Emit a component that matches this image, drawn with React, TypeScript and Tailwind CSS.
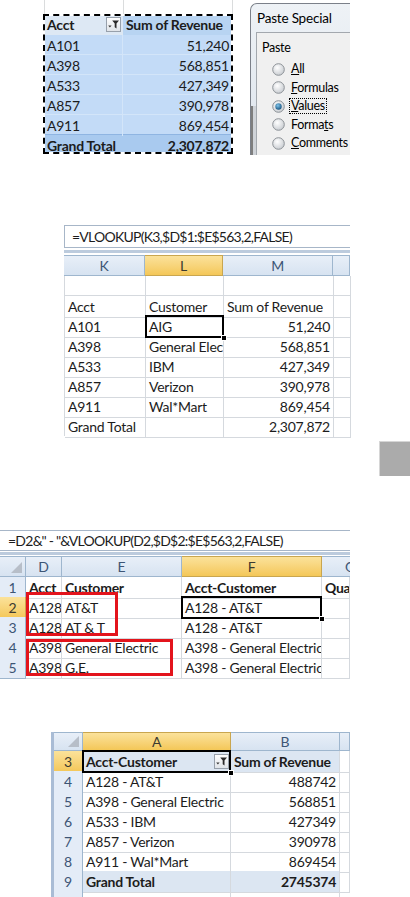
import React from "react";

const FONT = "font-['Lato','Open_Sans',sans-serif] text-[14px] tracking-[-0.25px]";
const FBAR = "text-[14px] tracking-[-0.75px]";
const UI = "font-['Lato','Open_Sans',sans-serif]";

function Cell({
  children,
  right = false,
  bold = false,
  bg = "",
  sel = false,
}: {
  children?: React.ReactNode;
  right?: boolean;
  bold?: boolean;
  bg?: string;
  sel?: boolean;
}) {
  return (
    <div className={`relative border-r border-b border-[#d5d9de] ${bg}`}>
      <div
        className={`flex h-full items-center overflow-hidden whitespace-nowrap px-[3px] ${
          right ? "justify-end" : "justify-start"
        } ${bold ? "font-bold" : ""}`}
      >
        {children}
      </div>
      {sel && <SelBox />}
    </div>
  );
}

function SelBox() {
  return (
    <>
      <div className="pointer-events-none absolute left-[-1px] top-[-1px] right-[-1px] bottom-[-1px] z-10 border-2 border-black" />
      <div className="absolute right-[-4px] bottom-[-4px] z-20 h-[6px] w-[6px] border border-white bg-black" />
    </>
  );
}

function ColHead({ children, sel = false }: { children?: React.ReactNode; sel?: boolean }) {
  return (
    <div
      className={`flex items-center justify-center overflow-hidden whitespace-nowrap border-r border-b border-t text-[14px] ${
        sel
          ? "border-[#c9a64f] bg-gradient-to-b from-[#fbe29a] to-[#f4c757] text-[#3c3a30]"
          : "border-[#9eb6ce] bg-gradient-to-b from-[#e8eff8] to-[#d7e3f1] text-[#3d5575]"
      }`}
    >
      {children}
    </div>
  );
}

function RowHead({ children, sel = false }: { children?: React.ReactNode; sel?: boolean }) {
  return (
    <div
      className={`flex items-center justify-center border-r border-b text-[14px] ${
        sel
          ? "border-[#c9a64f] bg-gradient-to-b from-[#fbe29a] to-[#f4c757] text-[#3c3a30]"
          : "border-[#9eb6ce] bg-[#e4ecf7] text-[#3d5575]"
      }`}
    >
      {children}
    </div>
  );
}

function Corner() {
  return (
    <div className="relative border-r border-b border-t border-[#9eb6ce] bg-gradient-to-b from-[#e8eff8] to-[#d7e3f1]">
      <svg className="absolute right-[2px] bottom-[2px]" width="13" height="13" viewBox="0 0 13 13">
        <path d="M12 1 L12 12 L1 12 Z" fill="#b7bec8" />
      </svg>
    </div>
  );
}

function FilterBtn() {
  return (
    <svg width="15" height="15" viewBox="0 0 15 15" className="shrink-0">
      <defs>
        <linearGradient id="fbg" x1="0" y1="0" x2="0" y2="1">
          <stop offset="0" stopColor="#ffffff" />
          <stop offset="1" stopColor="#dfe3e8" />
        </linearGradient>
      </defs>
      <rect x="0.5" y="0.5" width="14" height="14" fill="url(#fbg)" stroke="#97a0ab" />
      <path d="M2.2 8.6 H5.6 L3.9 10.6 Z" fill="#3a3a3a" />
      <path d="M6.2 3.4 H13 L10.5 6.6 V11.4 L8.7 10.2 V6.6 Z" fill="#2a2a2a" />
    </svg>
  );
}

function Radio({ on = false }: { on?: boolean }) {
  return (
    <svg width="13" height="13" viewBox="0 0 13 13" className="shrink-0">
      <defs>
        <radialGradient id={on ? "rgon" : "rgoff"} cx="40%" cy="35%" r="70%">
          <stop offset="0" stopColor="#ffffff" />
          <stop offset="1" stopColor="#c6cacf" />
        </radialGradient>
        <radialGradient id="dot" cx="40%" cy="35%" r="70%">
          <stop offset="0" stopColor="#7fc3ea" />
          <stop offset="1" stopColor="#14507c" />
        </radialGradient>
      </defs>
      <circle cx="6.5" cy="6.5" r="5.8" fill={on ? "url(#rgon)" : "url(#rgoff)"} stroke="#8d9297" strokeWidth="1" />
      {on && <circle cx="6.5" cy="6.5" r="3.2" fill="url(#dot)" />}
    </svg>
  );
}

function Section1() {
  const rows: [string, string][] = [
    ["A101", "51,240"],
    ["A398", "568,851"],
    ["A533", "427,349"],
    ["A857", "390,978"],
    ["A911", "869,454"],
  ];
  return (
    <div className="flex h-[155px]">
      <div className="ml-[43px] w-[190px]">
        <div className="flex h-[14px] pl-[1px]">
          <div className="w-[79px] border-l border-[#dadcdd]" />
          <div className="w-[109px] border-l border-[#dadcdd]" />
          <div className="w-[1px] border-l border-[#dadcdd]" />
        </div>
        <div className={`relative text-[#1c1c1c] ${FONT}`}>
          <div className="grid h-[20px] grid-cols-[80px_110px]">
            <div className="flex items-center justify-between bg-[#dde8f4] pl-[4px] pr-[2px] font-bold">
              <span>Acct</span>
              <FilterBtn />
            </div>
            <div className="flex items-center bg-[#b8d4f2] pl-[3px] font-bold">Sum of Revenue</div>
          </div>
          {rows.map(([a, v]) => (
            <div key={a} className="grid h-[20px] grid-cols-[80px_110px] border-t border-[#d3e5f9] bg-[#c3dbf7]">
              <div className="flex items-center border-r border-[#d3e5f9] pl-[4px]">{a}</div>
              <div className="flex items-center justify-end pr-[4px]">{v}</div>
            </div>
          ))}
          <div className="grid h-[20px] grid-cols-[80px_110px] border-t border-[#8fb5e2] bg-[#a9caef] font-bold">
            <div className="flex items-center pl-[4px]">Grand Total</div>
            <div className="flex items-center justify-end pr-[4px]">2,307,872</div>
          </div>
          <div className="pointer-events-none absolute inset-0 border-2 border-white" />
          <div className="pointer-events-none absolute inset-0 border-2 border-dashed border-black" />
        </div>
      </div>
      <div className="ml-[17px] w-[100px] overflow-hidden pt-[3px]">
        <div className={`flex h-full flex-col rounded-tl-[7px] border-l border-t border-[#7b8089] bg-gradient-to-b from-[#eef2f6] to-[#dde4ec] ${UI}`}>
          <div className="flex h-[28px] items-center whitespace-nowrap pl-[6px] text-[13.5px] tracking-[-0.2px] text-black">Paste Special</div>
          <div className="flex flex-1">
            <div className="flex w-[5px] flex-col">
              <div className="h-[74px]" />
              <div className="flex-1 border-l-2 border-[#7e7e7e] bg-[#cfd3d8]" />
            </div>
            <div className="flex-1 border-l border-t border-[#a3a8ae] bg-[#f0f0f0] pl-[5px] pt-[7px] text-[12.5px] tracking-[-0.3px] text-black">
              <div className="flex h-[16px] items-center">Paste</div>
              <div className="mt-[4px]">
                {[
                  ["", "A", "ll", false],
                  ["", "F", "ormulas", false],
                  ["", "V", "alues", true],
                  ["Forma", "t", "s", false],
                  ["", "C", "omments", false],
                ].map(([pre, u, post, on]) => (
                  <div key={String(u) + String(post)} className="flex h-[18.5px] items-center pl-[10px]">
                    <Radio on={Boolean(on)} />
                    <span
                      className={`ml-[4px] whitespace-nowrap px-[1px] leading-[14px] ${
                        on ? "border border-dotted border-black" : "border border-transparent"
                      }`}
                    >
                      {pre}
                      <span className="underline">{u}</span>
                      {post}
                    </span>
                  </div>
                ))}
              </div>
            </div>
          </div>
        </div>
      </div>
    </div>
  );
}

function Section2() {
  const rows: [string, string, string][] = [
    ["", "", ""],
    ["Acct", "Customer", "Sum of Revenue"],
    ["A101", "AIG", "51,240"],
    ["A398", "General Electric", "568,851"],
    ["A533", "IBM", "427,349"],
    ["A857", "Verizon", "390,978"],
    ["A911", "Wal*Mart", "869,454"],
    ["Grand Total", "", "2,307,872"],
  ];
  return (
    <div className={`ml-[64px] mt-[70px] w-[286px] text-[#1c1c1c] ${FONT}`}>
      <div className={`flex h-[23px] items-center whitespace-nowrap border-y border-l border-[#a7b6c8] pl-[7px] ${FBAR}`}>
        {"=VLOOKUP(K3,$D$1:$E$563,2,FALSE)"}
      </div>
      <div className="h-[2px]" />
      <div className="h-[3px] bg-[#bccbdd]" />
      <div className="h-[2px]" />
      <div className="grid h-[21px] grid-cols-[81px_78px_110px_17px]">
        <ColHead>K</ColHead>
        <ColHead sel>L</ColHead>
        <ColHead>M</ColHead>
        <ColHead />
      </div>
      {rows.map(([a, b, c], i) => (
        <div key={i} className="grid h-[20px] grid-cols-[81px_78px_110px_17px] border-l border-[#d5d9de]">
          <Cell>{a}</Cell>
          <Cell sel={i === 2}>{b}</Cell>
          <Cell right={i !== 1}>{c}</Cell>
          <Cell />
        </div>
      ))}
    </div>
  );
}

function GrayBox() {
  return (
    <div className="mt-[5px] flex justify-end">
      <div className="h-[35px] w-[31px] border-l border-t border-[#d6d6d6] bg-[#ababab]" />
    </div>
  );
}

function Section3() {
  const rows: [string, string, string, string][] = [
    ["A128", "AT&T", "A128 - AT&T", ""],
    ["A128", "AT & T", "A128 - AT&T", ""],
    ["A398", "General Electric", "A398 - General Electric", ""],
    ["A398", "G.E.", "A398 - General Electric", ""],
  ];
  return (
    <div className={`mt-[54px] w-[350px] text-[#1c1c1c] ${FONT}`}>
      <div className={`flex h-[21px] items-center whitespace-nowrap border-y border-[#a7b6c8] pl-[8px] ${FBAR}`}>
        {'=D2&" - "&VLOOKUP(D2,$D$2:$E$563,2,FALSE)'}
      </div>
      <div className="h-[1px]" />
      <div className="h-[3px] bg-[#bccbdd]" />
      <div className="h-[1px]" />
      <div className="grid h-[21px] grid-cols-[26px_36px_120px_140px_28px]">
        <Corner />
        <ColHead>D</ColHead>
        <ColHead>E</ColHead>
        <ColHead sel>F</ColHead>
        <div className="flex justify-center overflow-hidden border-b border-t border-[#9eb6ce] bg-gradient-to-b from-[#e8eff8] to-[#d7e3f1]">
          <div className="flex w-[56px] shrink-0 translate-x-[14px] items-center justify-center text-[14px] text-[#3d5575]">G</div>
        </div>
      </div>
      <div className="relative">
        <div className="grid h-[20px] grid-cols-[26px_36px_120px_140px_28px]">
          <RowHead>1</RowHead>
          <Cell bold>Acct</Cell>
          <Cell bold>Customer</Cell>
          <Cell bold>Acct-Customer</Cell>
          <Cell bold>Quantity</Cell>
        </div>
        {rows.map(([a, b, c, d], i) => (
          <div key={i} className="grid h-[20px] grid-cols-[26px_36px_120px_140px_28px]">
            <RowHead sel={i === 0}>{i + 2}</RowHead>
            <Cell>{a}</Cell>
            <Cell>{b}</Cell>
            <Cell sel={i === 0}>{c}</Cell>
            <Cell>{d}</Cell>
          </div>
        ))}
        <div className="pointer-events-none absolute left-[26px] top-[15px] z-30 h-[44px] w-[92px] border-[3px] border-[#e3141c]" />
        <div className="pointer-events-none absolute left-[26px] top-[62px] z-30 h-[37px] w-[147px] border-[3px] border-[#e3141c]" />
      </div>
    </div>
  );
}

function Section4() {
  const rows: [string, string][] = [
    ["A128 - AT&T", "488742"],
    ["A398 - General Electric", "568851"],
    ["A533 - IBM", "427349"],
    ["A857 - Verizon", "390978"],
    ["A911 - Wal*Mart", "869454"],
  ];
  return (
    <div className={`ml-[51px] mt-[55px] flex w-[299px] text-[#1c1c1c] ${FONT}`}>
      <div className="w-[3px] bg-[#a9bcd5]" />
      <div className="flex-1">
        <div className="grid h-[19px] grid-cols-[29px_148px_109px_10px]">
          <Corner />
          <ColHead sel>A</ColHead>
          <ColHead>B</ColHead>
          <ColHead />
        </div>
        <div className="grid h-[20px] grid-cols-[29px_148px_109px_10px]">
          <RowHead sel>3</RowHead>
          <div className="relative border-r border-b border-[#d5d9de] bg-[#dce6f2]">
            <div className="flex h-full items-center justify-between pl-[3px] pr-[1px] font-bold">
              <span>Acct-Customer</span>
              <FilterBtn />
            </div>
            <SelBox />
          </div>
          <Cell bold bg="bg-[#dce6f2]">Sum of Revenue</Cell>
          <Cell />
        </div>
        {rows.map(([a, v], i) => (
          <div key={i} className="grid h-[20px] grid-cols-[29px_148px_109px_10px]">
            <RowHead>{i + 4}</RowHead>
            <Cell>{a}</Cell>
            <Cell right>{v}</Cell>
            <Cell />
          </div>
        ))}
        <div className="grid h-[20px] grid-cols-[29px_148px_109px_10px]">
          <RowHead>9</RowHead>
          <Cell bold bg="bg-[#dce6f2]">Grand Total</Cell>
          <Cell bold right bg="bg-[#dce6f2]">2745374</Cell>
          <Cell />
        </div>
        <div className="grid h-[6px] grid-cols-[29px_148px_109px_10px]">
          <div className="border-r border-[#9eb6ce] bg-[#e4ecf7]" />
          <div className="border-r border-[#d5d9de]" />
          <div className="border-r border-[#d5d9de]" />
          <div />
        </div>
      </div>
    </div>
  );
}

export default function App() {
  return (
    <div className="h-[897px] w-[410px] overflow-hidden bg-white">
      <Section1 />
      <Section2 />
      <GrayBox />
      <Section3 />
      <Section4 />
    </div>
  );
}
